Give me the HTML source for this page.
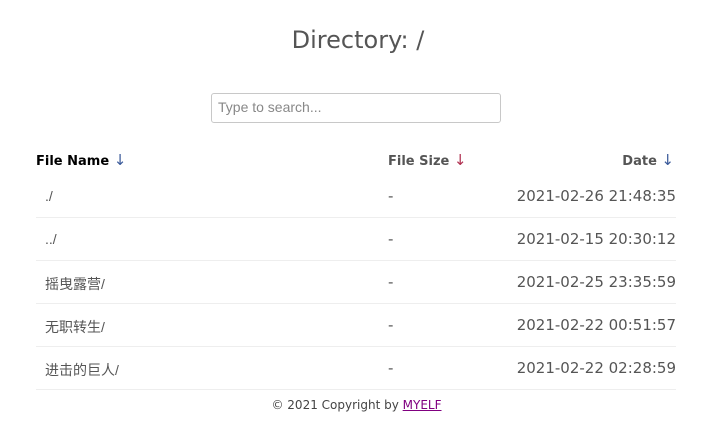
<!DOCTYPE html>
<html><head><meta charset="utf-8"><style>
body{margin:0;background:#fff;font-family:"DejaVu Sans","Liberation Sans","Noto Sans CJK SC",sans-serif;color:#555;width:727px;height:423px;overflow:hidden}
h1{position:absolute;top:26px;left:0;width:716px;text-align:center;margin:0;font-weight:normal;font-size:24px;color:#555}
.search{position:absolute;left:211px;top:93px;border:1px solid #c8c8c8;border-radius:3px;box-sizing:border-box;width:290px;height:30px;font-size:14px;color:#888;padding:5px 6px;font-family:"Liberation Sans",sans-serif}
.hd{position:absolute;top:151px;font-size:13px;font-weight:bold}
.ar{font-weight:normal;font-size:15px}
.row{position:absolute;left:36px;width:640px;height:42px;border-bottom:1px solid #eee;font-size:15px}
.row span{position:absolute;top:12px}
.n{left:9px;font-size:14px;top:13px!important;font-family:"Liberation Sans","Noto Sans CJK SC",sans-serif}
.s{left:352px}
.d{right:0}
.foot{position:absolute;top:398px;left:0;width:713px;text-align:center;font-size:12px;color:#444}
.foot a{color:#800080;text-decoration:underline}
</style></head><body>
<h1>Directory: /</h1>
<div class="search">Type to search...</div>
<div class="hd" style="left:36px;color:#000">File Name <span class="ar" style="color:#3a5a9a">↓</span></div>
<div class="hd" style="left:388px">File Size <span class="ar" style="color:#b03050">↓</span></div>
<div class="hd" style="right:53px">Date <span class="ar" style="color:#3a5a9a">↓</span></div>
<div class="row" style="top:175px"><span class="n">./</span><span class="s">-</span><span class="d">2021-02-26 21:48:35</span></div>
<div class="row" style="top:218px"><span class="n">../</span><span class="s">-</span><span class="d">2021-02-15 20:30:12</span></div>
<div class="row" style="top:261px"><span class="n">摇曳露营/</span><span class="s">-</span><span class="d">2021-02-25 23:35:59</span></div>
<div class="row" style="top:304px"><span class="n">无职转生/</span><span class="s">-</span><span class="d">2021-02-22 00:51:57</span></div>
<div class="row" style="top:347px"><span class="n">进击的巨人/</span><span class="s">-</span><span class="d">2021-02-22 02:28:59</span></div>
<div class="foot">© 2021 Copyright by <a>MYELF</a></div>
</body></html>
